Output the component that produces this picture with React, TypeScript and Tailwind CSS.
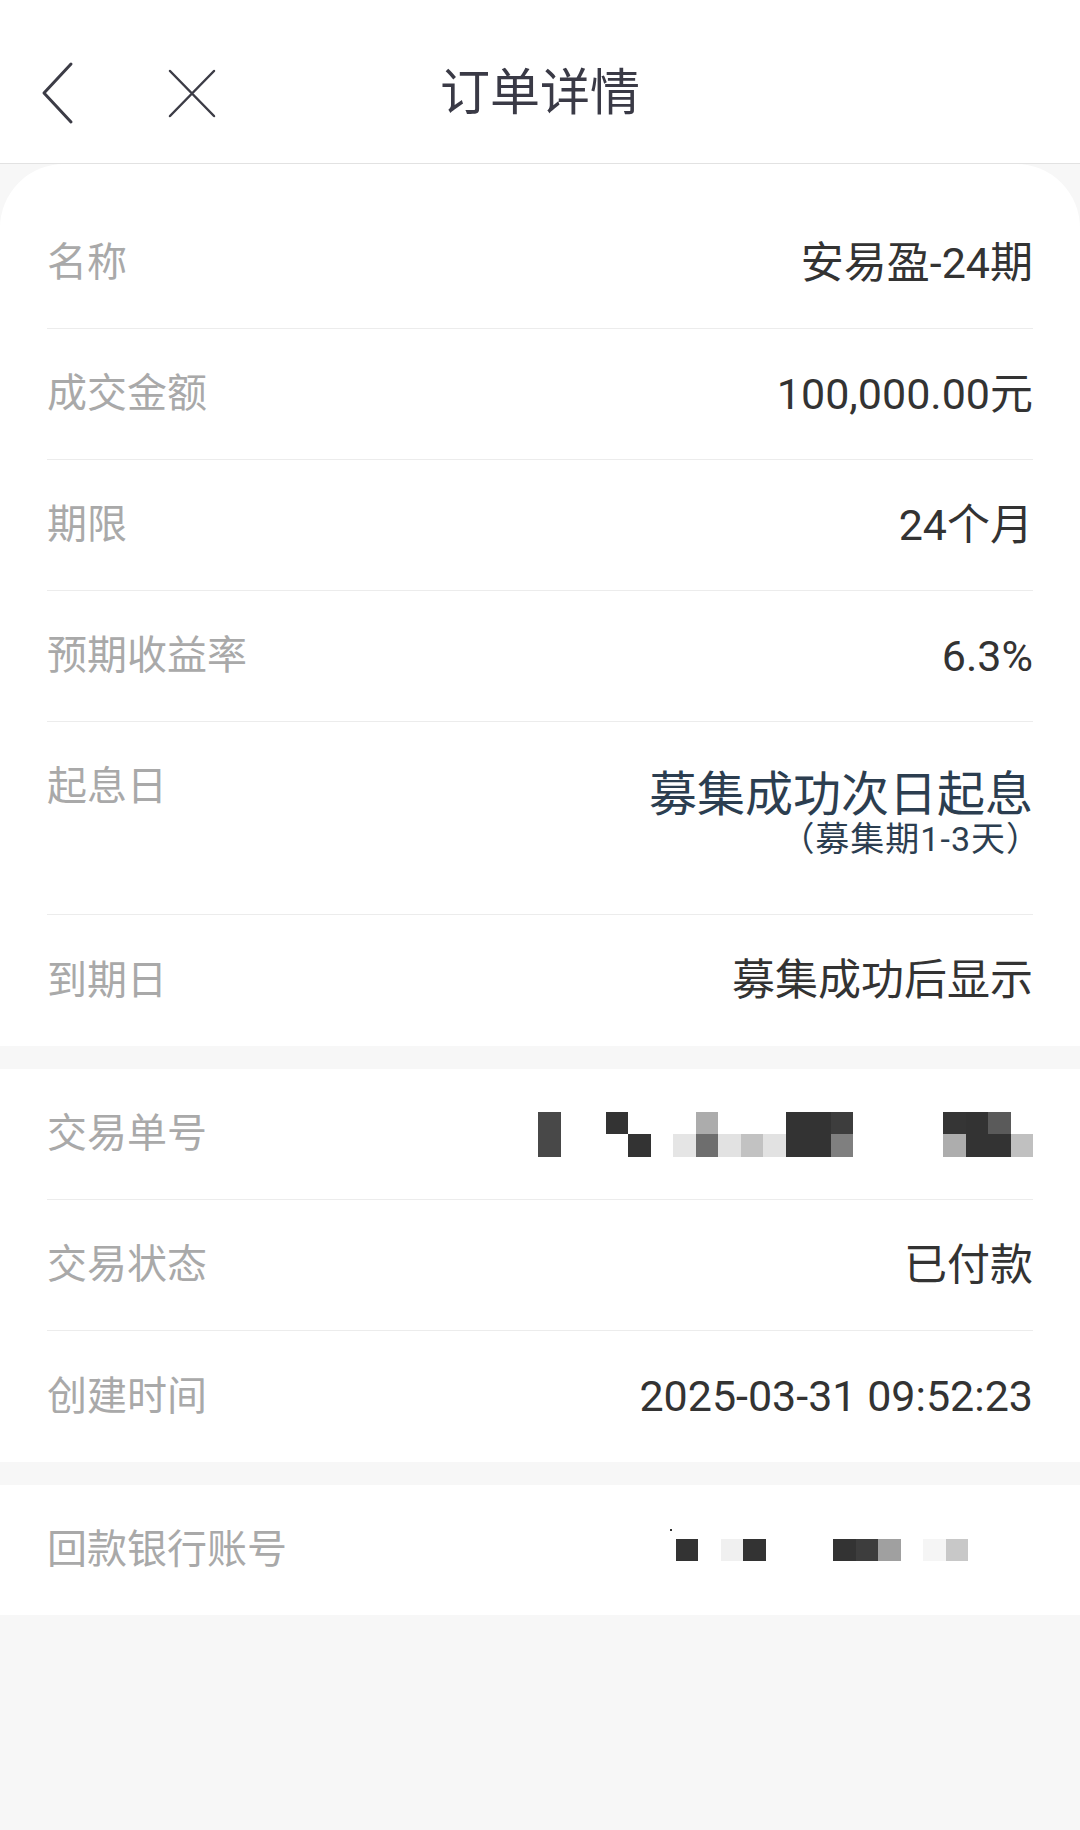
import React from 'react';

const font = { fontFamily: '"Roboto", "Noto Sans CJK SC", sans-serif' };

type Row = { label: string; value?: React.ReactNode };

function InfoRow({ label, value, last }: Row & { last?: boolean }) {
  return (
    <div className={`flex h-[131px] items-center justify-between ${last ? '' : 'border-b border-[#ececec]'}`}>
      <span className="text-[40px] text-[#a9a9a9]">{label}</span>
      <span className="text-[43px] text-[#333333]">{value}</span>
    </div>
  );
}

// pixelated redaction blocks, [col, row, colour]
const orderCells: [number, number, string][] = [
  [0, 0, '#484848'], [0, 1, '#484848'],
  [3, 0, '#333333'], [4, 1, '#333333'],
  [6, 1, '#e5e5e5'], [7, 0, '#acacac'], [7, 1, '#6e6e6e'],
  [8, 1, '#e2e2e2'], [9, 1, '#c2c2c2'], [10, 1, '#e2e2e2'],
  [11, 0, '#333333'], [11, 1, '#333333'], [12, 0, '#333333'], [12, 1, '#333333'],
  [13, 0, '#3d3d3d'], [13, 1, '#7f7f7f'],
  [18, 0, '#353535'], [18, 1, '#adadad'],
  [19, 0, '#333333'], [19, 1, '#333333'],
  [20, 0, '#5a5a5a'], [20, 1, '#333333'],
  [21, 1, '#c0c0c0'],
];

const bankCells: [number, number, string][] = [
  [0, 0, '#333333'], [2, 0, '#f0f0f0'], [3, 0, '#333333'],
  [7, 0, '#333333'], [8, 0, '#3d3d3d'], [9, 0, '#a0a0a0'],
  [11, 0, '#f5f5f5'], [12, 0, '#c8c8c8'],
];

function Mosaic({ cells, cols, rows }: { cells: [number, number, string][]; cols: number; rows: number }) {
  const size = 22.5;
  return (
    <div className="relative" style={{ width: cols * size, height: rows * size }}>
      {cells.map(([c, r, color], i) => (
        <div
          key={i}
          className="absolute"
          style={{ left: c * size, top: r * size, width: size, height: size, backgroundColor: color }}
        />
      ))}
    </div>
  );
}

export default function App() {
  return (
    <div className="min-h-[1830px] w-[1080px] bg-[#f7f7f7]" style={font}>
      {/* header */}
      <div className="relative flex h-[164px] items-center justify-center border-b border-[#e2e2e2] bg-white">
        <svg className="absolute left-[40px] top-[60px]" width="36" height="66" viewBox="0 0 36 66" fill="none">
          <path d="M31 4 L4 33 L31 62" stroke="#3c3c46" strokeWidth="3" strokeLinecap="round" strokeLinejoin="round" />
        </svg>
        <svg className="absolute left-[166px] top-[67px]" width="52" height="53" viewBox="0 0 52 53" fill="none">
          <path d="M4 4 L48 49 M48 4 L4 49" stroke="#3c3c46" strokeWidth="2.5" strokeLinecap="round" />
        </svg>
        <h1 className="mt-[24px] text-[50px] font-normal text-[#3a3a46]">订单详情</h1>
      </div>

      {/* section 1 */}
      <div className="rounded-t-[64px] bg-white px-[47px] pt-[34px]">
        <InfoRow label="名称" value="安易盈-24期" />
        <InfoRow label="成交金额" value="100,000.00元" />
        <InfoRow label="期限" value="24个月" />
        <InfoRow label="预期收益率" value="6.3%" />
        <div className="flex h-[193px] items-start justify-between border-b border-[#ececec]">
          <span className="pt-[45px] text-[40px] leading-[40px] text-[#a9a9a9]">起息日</span>
          <div className="flex flex-col items-end pt-[50px]">
            <span className="text-[48px] leading-[46px] text-[#2c3e50]">募集成功次日起息</span>
            <span className="mr-[-8px] mt-[4px] text-[34px] leading-[34px] tracking-[1px] text-[#2c3e50]">（募集期1-3天）</span>
          </div>
        </div>
        <InfoRow label="到期日" value="募集成功后显示" last />
      </div>

      {/* section 2 */}
      <div className="mt-[23px] bg-white px-[47px]">
        <div className="flex h-[131px] items-center justify-between border-b border-[#ececec]">
          <span className="text-[40px] text-[#a9a9a9]">交易单号</span>
          <Mosaic cells={orderCells} cols={22} rows={2} />
        </div>
        <InfoRow label="交易状态" value="已付款" />
        <InfoRow label="创建时间" value="2025-03-31 09:52:23" last />
      </div>

      {/* section 3 */}
      <div className="mt-[23px] bg-white px-[47px]">
        <div className="flex h-[130px] items-center">
          <span className="text-[40px] text-[#a9a9a9]">回款银行账号</span>
          <div className="relative ml-auto mr-[65px]">
            <div className="absolute left-[-6px] top-[-10px] h-[2px] w-[2px] bg-[#333333]" />
            <Mosaic cells={bankCells} cols={13} rows={1} />
          </div>
        </div>
      </div>
    </div>
  );
}
